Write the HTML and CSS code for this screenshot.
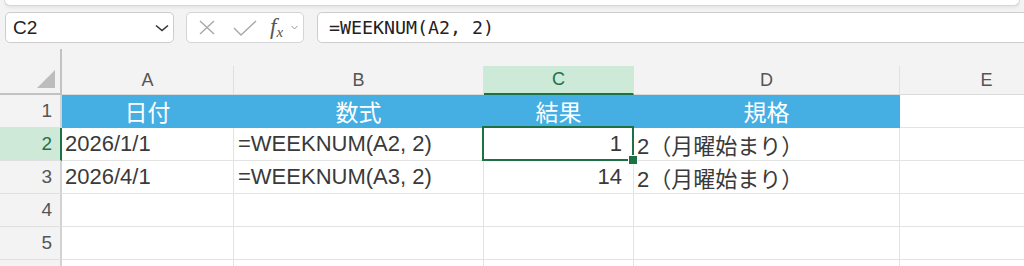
FILE: index.html
```html
<!doctype html>
<html>
<head>
<meta charset="utf-8">
<title>WEEKNUM</title>
<link rel="stylesheet" href="styles.css">
</head>
<body>
<div class="ribbon"></div>
<div class="fbar">
  <div class="namebox">
    <span>C2</span>
    <svg width="14" height="8" viewBox="0 0 14 8"><path d="M1 1.5 L7 6.5 L13 1.5" fill="none" stroke="#333" stroke-width="1.6"/></svg>
  </div>
  <div class="btns">
    <svg width="18" height="15" viewBox="0 0 18 15"><path d="M2 1 L16 14 M16 1 L2 14" stroke="#a8a8a8" stroke-width="1.4" fill="none"/></svg>
    <svg width="24" height="16" viewBox="0 0 24 16"><path d="M1 8 L8 15 L23 1" stroke="#a8a8a8" stroke-width="1.4" fill="none"/></svg>
    <span class="fx"><i>f</i><sub>x</sub></span>
    <svg width="7" height="5" viewBox="0 0 7 5"><path d="M0.5 0.8 L3.5 4 L6.5 0.8" stroke="#999" stroke-width="1" fill="none"/></svg>
  </div>
  <div class="formula">=WEEKNUM(A2, 2)</div>
</div>

<div class="sheet">
  <div class="corner"><span class="tri"></span></div>
  <div class="col">A</div>
  <div class="col">B</div>
  <div class="col sel">C</div>
  <div class="col">D</div>
  <div class="col">E</div>

  <div class="rh">1</div>
  <div class="c hd">日付</div>
  <div class="c hd">数式</div>
  <div class="c hd">結果</div>
  <div class="c hd">規格</div>
  <div class="c"></div>

  <div class="rh sel">2</div>
  <div class="c">2026/1/1</div>
  <div class="c f">=WEEKNUM(A2, 2)</div>
  <div class="c num active">1</div>
  <div class="c">2（月曜始まり）</div>
  <div class="c"></div>

  <div class="rh">3</div>
  <div class="c">2026/4/1</div>
  <div class="c f">=WEEKNUM(A3, 2)</div>
  <div class="c num">14</div>
  <div class="c">2（月曜始まり）</div>
  <div class="c"></div>

  <div class="rh">4</div>
  <div class="c"></div><div class="c"></div><div class="c"></div><div class="c"></div><div class="c"></div>

  <div class="rh">5</div>
  <div class="c"></div><div class="c"></div><div class="c"></div><div class="c"></div><div class="c"></div>

  <div class="rh"></div>
  <div class="c"></div><div class="c"></div><div class="c"></div><div class="c"></div><div class="c"></div>
</div>
</body>
</html>
```

FILE: styles.css
```css
*{margin:0;padding:0;box-sizing:border-box}
html,body{width:1024px;height:266px;overflow:hidden}
body{background:#f3f3f3;font-family:"Liberation Sans","Noto Sans CJK JP",sans-serif;color:#333}

.ribbon{height:6px;margin:0 4px;background:#fff;border:1px solid #d6d6d6;border-top:0;border-radius:0 0 7px 7px;box-shadow:0 2px 3px rgba(0,0,0,.06)}

.fbar{display:flex;height:31px;margin-top:6px;padding-left:5px}
.namebox{width:169px;display:flex;align-items:center;justify-content:space-between;padding:0 4px 0 7px;background:#fff;border:1px solid #cdcdcd;border-radius:5px;font-size:19px;color:#222}
.btns{width:118px;margin-left:12px;display:flex;align-items:center;padding-left:11px;background:#fff;border:1px solid #d4d4d4;border-radius:5px}
.btns svg:nth-child(2){margin-left:17px}
.fx{margin-left:13px;font-family:"Liberation Serif",serif;font-size:23px;color:#555;line-height:1}
.fx sub{font-size:15px;font-style:italic;vertical-align:-3px}
.btns svg:last-child{margin-left:8px}
.formula{flex:1;margin-left:13px;margin-right:-10px;display:flex;align-items:center;padding-left:11px;background:#fff;border:1px solid #cdcdcd;border-radius:5px;font-family:"DejaVu Sans Mono",monospace;font-size:18.3px;color:#222}

.sheet{display:grid;grid-template-columns:62px 172px 250px 150px 266px 174px;grid-template-rows:46px repeat(6,33px);margin-top:6px}
.corner{display:flex;justify-content:flex-end;align-items:flex-end;padding:0 5px 5px 0;border-right:2px solid #c2c2c2;border-bottom:2px solid #c2c2c2}
.tri{width:18px;height:18px;background:#bdbdbd;clip-path:polygon(100% 0,100% 100%,0 100%)}
.col{align-self:end;height:29px;display:flex;align-items:center;justify-content:center;font-size:18px;color:#555;border-right:1px solid #e0e0e0;border-bottom:1px solid #dadada}
.col.sel{background:#cde9d8;color:#1e7145;border-bottom:2px solid #1e7145;border-right-color:#cde9d8}

.rh{display:flex;align-items:center;justify-content:flex-end;padding-right:8px;font-size:19px;color:#555;border-right:2px solid #d2d2d2;border-bottom:1px solid #e0e0e0}
.rh.sel{background:#cfe9d9;color:#1e7145;border-right-color:#1e7145}

.c{display:flex;align-items:center;padding-left:3px;font-size:22px;color:#3a3a3a;white-space:nowrap;background:#fff;border-right:1px solid #e3e3e3;border-bottom:1px solid #e3e3e3}
.c.f{padding-left:4px}
.c.hd{justify-content:center;padding:0;background:#45aee2;color:#fff;font-family:"Noto Sans CJK JP",sans-serif;font-size:23px;border-color:#45aee2}
.c.num{justify-content:flex-end;padding-right:11px}
.active{position:relative}
.active::after{content:"";position:absolute;top:-2px;left:-2px;right:-1px;bottom:-1px;border:2px solid #1e7145}
.active::before{content:"";position:absolute;right:-5px;bottom:-5px;width:8px;height:8px;background:#1e7145;border:1px solid #fff;z-index:1}
```
